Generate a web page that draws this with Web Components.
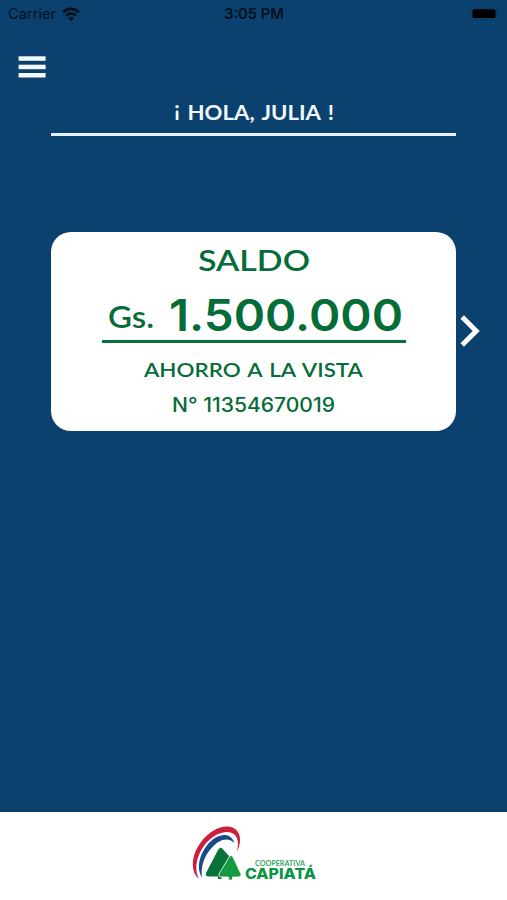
<!DOCTYPE html>
<html lang="es">
<head>
<meta charset="utf-8">
<title>Cooperativa Capiatá</title>
<style>
	body {
		margin: 0;
		font-family: Lato, "Liberation Sans", sans-serif;
	}
</style>
</head>
<body>
<home-screen></home-screen>

<script>
// One line of text stretched to an exact width.
// Attributes: text, width, size, weight, family
class FitText extends HTMLElement {
	constructor() {
		super();
		this.shadowDOM = this.attachShadow({ mode: "open" });
	}

	connectedCallback() {
		this.render();
	}

	render() {
		const width = this.getAttribute("width");
		const size = Number(this.getAttribute("size"));
		const weight = this.getAttribute("weight") || 600;
		const family = this.getAttribute("family") || "Lato";
		// the opening mark hangs below the baseline, lift it to cap height
		const text = this.getAttribute("text").replace(
			"¡ ",
			`<tspan dy="-3.8">¡</tspan><tspan dy="3.8"> </tspan>`
		);

		this.shadowDOM.innerHTML = `
            <style>
                :host {
                    display: block;
                    flex: none;
                }
                svg {
                    display: block;
                    overflow: visible;
                }
                text {
                    font-family: ${family}, "Liberation Sans", sans-serif;
                    font-size: ${size}px;
                    font-weight: ${weight};
                    fill: currentColor;
                }
            </style>

            <svg width="${width}" height="${size}">
                <text x="0" y="${size * 0.86}" textLength="${width}" lengthAdjust="spacingAndGlyphs">${text}</text>
            </svg>
        `;
	}
}

class StatusBar extends HTMLElement {
	constructor() {
		super();
		this.shadowDOM = this.attachShadow({ mode: "open" });
	}

	connectedCallback() {
		this.shadowDOM.innerHTML = `
            <style>
                :host {
                    display: grid;
                    grid-template-columns: 1fr auto 1fr;
                    align-items: center;
                    box-sizing: border-box;
                    height: 27px;
                    padding: 1px 8px 0;
                    color: #04101d;
                }
                .carrier {
                    display: flex;
                    align-items: center;
                    gap: 6px;
                }
                svg {
                    display: block;
                }
                .battery {
                    justify-self: end;
                }
            </style>

            <div class="carrier">
                <fit-text text="Carrier" width="48" size="14.5" weight="400" family="Inter"></fit-text>
                <svg width="18" height="15" viewBox="0 0 18 15" fill="none" stroke="#04101d">
                    <path d="M1 5.2 C5.5 .7 12.5 .7 17 5.2" stroke-width="2.8"/>
                    <path d="M3.9 8.6 C7 5.9 11 5.9 14.1 8.6" stroke-width="2.6"/>
                    <path d="M6 11 Q9 8.6 12 11 L9 14.2 Z" fill="#04101d" stroke="none"/>
                </svg>
            </div>
            <fit-text text="3:05 PM" width="60" size="14.5" weight="600" family="Inter"></fit-text>
            <svg class="battery" width="30" height="14" viewBox="0 0 30 14">
                <rect x="1.5" y="1" width="26" height="11.5" rx="3" fill="none" stroke="#0a3a62"/>
                <rect x="3.5" y="2.2" width="23" height="8.8" rx="1.6" fill="#000"/>
                <path d="M28.6 4.6 Q30 6.8 28.6 9 Z" fill="#0a3a62"/>
            </svg>
        `;
	}
}

class MenuButton extends HTMLElement {
	constructor() {
		super();
		this.shadowDOM = this.attachShadow({ mode: "open" });
	}

	connectedCallback() {
		this.shadowDOM.innerHTML = `
            <style>
                :host {
                    display: block;
                    width: 28px;
                    cursor: pointer;
                }
                svg {
                    display: block;
                }
            </style>

            <svg width="28" height="22" viewBox="0 0 28 22" fill="#f4f9fd">
                <rect x=".6" y=".3" width="27" height="4.5"/>
                <rect x=".6" y="8.7" width="27" height="4.5"/>
                <rect x=".6" y="17" width="27" height="4.5"/>
            </svg>
        `;
	}
}

class UserGreeting extends HTMLElement {
	constructor() {
		super();
		this.shadowDOM = this.attachShadow({ mode: "open" });
	}

	connectedCallback() {
		this.shadowDOM.innerHTML = `
            <style>
                :host {
                    display: flex;
                    flex-direction: column;
                    align-items: center;
                    padding-bottom: 10px;
                    border-bottom: 3px solid #e6f1fb;
                    color: #f1f7fd;
                }
                fit-text {
                    word-spacing: 2px;
                }
            </style>

            <fit-text text="¡ HOLA, ${this.getAttribute("name")} !" width="160" size="20.5" weight="700"></fit-text>
        `;
	}
}

class BalanceCard extends HTMLElement {
	constructor() {
		super();
		this.shadowDOM = this.attachShadow({ mode: "open" });
	}

	connectedCallback() {
		this.shadowDOM.innerHTML = `
            <style>
                :host {
                    display: flex;
                    flex-direction: column;
                    align-items: center;
                    box-sizing: border-box;
                    height: 199px;
                    padding-top: 14px;
                    border-radius: 20px;
                    background: #fff;
                    color: #066c38;
                }
                .amount {
                    display: flex;
                    align-items: flex-start;
                    justify-content: center;
                    box-sizing: border-box;
                    width: 304px;
                    height: 55px;
                    margin: 13px 0 17px;
                    padding-left: 4px;
                    gap: 15px;
                    border-bottom: 3px solid #06713b;
                }
                .currency {
                    margin-top: 14px;
                }
                .number {
                    margin-top: 5px;
                }
                .type {
                    word-spacing: 1.5px;
                }
                .account {
                    margin-top: 15px;
                }
            </style>

            <fit-text text="SALDO" width="112" size="29.5"></fit-text>
            <div class="amount">
                <fit-text class="currency" text="Gs." width="46" size="30"></fit-text>
                <fit-text class="number" text="${this.getAttribute("amount")}" width="234" size="44" family="Inter"></fit-text>
            </div>
            <fit-text class="type" text="AHORRO A LA VISTA" width="219" size="20"></fit-text>
            <fit-text class="account" text="N° ${this.getAttribute("account")}" width="163" size="19.5" weight="500" family="Inter"></fit-text>
        `;
	}
}

class NextArrow extends HTMLElement {
	constructor() {
		super();
		this.shadowDOM = this.attachShadow({ mode: "open" });
	}

	connectedCallback() {
		this.shadowDOM.innerHTML = `
            <style>
                :host {
                    display: block;
                    cursor: pointer;
                }
                svg {
                    display: block;
                }
            </style>

            <svg width="20" height="32" viewBox="0 0 20 32">
                <path d="M2.2 2 L16.2 16 L2.2 30" fill="none" stroke="#fff" stroke-width="5"/>
            </svg>
        `;
	}
}

class BrandFooter extends HTMLElement {
	constructor() {
		super();
		this.shadowDOM = this.attachShadow({ mode: "open" });
	}

	connectedCallback() {
		this.shadowDOM.innerHTML = `
            <style>
                :host {
                    display: flex;
                    justify-content: center;
                    align-items: flex-start;
                    box-sizing: border-box;
                    height: 88px;
                    padding-top: 13px;
                    gap: 3px;
                    background: #fff;
                }
                svg {
                    display: block;
                }
                .name {
                    display: flex;
                    flex-direction: column;
                    align-items: center;
                    padding-top: 35px;
                    color: #0b9446;
                }
                .small {
                    color: #3aa468;
                }
            </style>

            <svg width="50" height="56" viewBox="192 825 50 56">
                <path d="M199 879 C190 872 191 855 201 842 C213 826 233 821 239 834 C241 839 240 845 237 852 C238 845 239 840 235 835 C228 828 213 834 204.500 845 C196 857 194 870 199 879 Z" fill="#cc1f3d"/>
                <path d="M202 878 C196 868 199 855 208 844 C216 834.500 230 830 234.500 843 C227 836.500 219 840 212 847.500 C204 856 200.500 867 202 878 Z" fill="#174a8b"/>
                <path d="M220.500 847.500 Q219 848 217.500 851 L206 873 Q205 876.500 209 876.500 H218 V879 H221.500 V876.500 H229 V856 L223.500 850 Q222 847.500 220.500 847.500 Z" fill="#077338"/>
                <path d="M231 855.500 Q229.500 855.500 228.500 858 L219.500 873 Q217.500 877 221.500 877 H228.500 V880 H232.500 V877 H238 Q242.500 877 240.500 873 L233.500 858 Q232.500 855.500 231 855.500 Z" fill="#149b42" stroke="#fff" stroke-width=".8"/>
            </svg>
            <div class="name">
                <fit-text class="small" text="COOPERATIVA" width="50" size="7" weight="700"></fit-text>
                <fit-text text="CAPIATÁ" width="71" size="14.5" weight="800" family="Inter"></fit-text>
            </div>
        `;
	}
}

class HomeScreen extends HTMLElement {
	constructor() {
		super();
		this.shadowDOM = this.attachShadow({ mode: "open" });
	}

	connectedCallback() {
		this.shadowDOM.innerHTML = `
            <style>
                :host {
                    display: flex;
                    flex-direction: column;
                    height: 900px;
                    background: #0b416f;
                }
                menu-button {
                    margin: 29px 0 0 18px;
                }
                user-greeting {
                    margin: 24px 51px 0;
                }
                .balance {
                    display: grid;
                    grid-template-columns: 51px 405px auto;
                    align-items: center;
                    margin-top: 96px;
                }
                balance-card {
                    grid-column: 2;
                }
                next-arrow {
                    margin-left: 4px;
                }
                brand-footer {
                    margin-top: auto;
                }
            </style>

            <status-bar></status-bar>
            <menu-button></menu-button>
            <user-greeting name="JULIA"></user-greeting>
            <div class="balance">
                <balance-card amount="1.500.000" account="11354670019"></balance-card>
                <next-arrow></next-arrow>
            </div>
            <brand-footer></brand-footer>
        `;
	}
}

customElements.define("fit-text", FitText);
customElements.define("status-bar", StatusBar);
customElements.define("menu-button", MenuButton);
customElements.define("user-greeting", UserGreeting);
customElements.define("balance-card", BalanceCard);
customElements.define("next-arrow", NextArrow);
customElements.define("brand-footer", BrandFooter);
customElements.define("home-screen", HomeScreen);
</script>
</body>
</html>
